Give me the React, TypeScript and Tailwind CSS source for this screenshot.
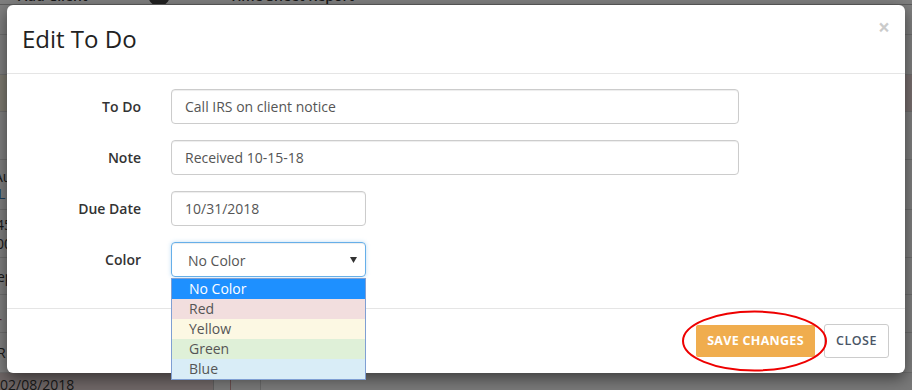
import React from "react";

function Caret() {
  return (
    <svg width="7" height="6" viewBox="0 0 7 6" className="block">
      <path d="M0 0 L7 0 L3.5 6 Z" fill="#333" />
    </svg>
  );
}

function Row({ label, children }: { label: string; children: React.ReactNode }) {
  return (
    <div className="flex items-center">
      <div className="w-[119px] text-right text-[14px] font-semibold text-[#333]">{label}</div>
      <div className="ml-[30px]">{children}</div>
    </div>
  );
}

function Input({ value, w }: { value: string; w: string }) {
  return (
    <div
      className={`${w} h-[35px] flex items-center rounded-[4px] border border-[#ccc] px-[13px] text-[14px] text-[#555] shadow-[inset_0_1px_1px_rgba(0,0,0,0.075)]`}
    >
      {value}
    </div>
  );
}

const options = [
  { name: "No Color", cls: "bg-[#1e90ff] text-white" },
  { name: "Red", cls: "bg-[#f2dede] text-[#555]" },
  { name: "Yellow", cls: "bg-[#fcf8e3] text-[#555]" },
  { name: "Green", cls: "bg-[#dff0d8] text-[#555]" },
  { name: "Blue", cls: "bg-[#d9edf7] text-[#555]" },
];

function BackgroundPage() {
  return (
    <div className="flex flex-col w-[912px] h-[390px] bg-white text-[14px] text-[#333]">
      <div className="h-[5px] overflow-hidden border-b border-[#bbb] flex">
        <div className="-mt-[14px] flex items-center gap-[60px] pl-[18px] text-[14px] font-semibold">
          <span>Add Client</span>
          <span className="w-[22px] h-[22px] rounded-full bg-[#444]" />
          <span>Time Sheet Report</span>
        </div>
      </div>
      <div className="h-[30px] border-b border-[#ddd]" />
      <div className="h-[40px] border-b border-[#ddd]" />
      <div className="h-[37px] flex border-b border-[#ddd]">
        <div className="w-[456px] bg-[#fcf6e2]" />
        <div className="flex-1 bg-[#f2dede]" />
      </div>
      <div className="h-[48px] border-b border-[#ddd]" />
      <div className="h-[50px] border-b border-[#ddd] flex flex-col justify-center leading-[17px]">
        <span className="-ml-[6px]">Aug</span>
        <span className="-ml-[2px] text-[#337ab7]">L</span>
      </div>
      <div className="h-[48px] border-b border-[#ddd] flex flex-col justify-center leading-[19px]">
        <span className="-ml-[4px]">45</span>
        <span className="-ml-[4px]">00</span>
      </div>
      <div className="h-[37px] border-b border-[#ddd] flex items-center">
        <span className="-ml-[3px]">ep</span>
      </div>
      <div className="h-[38px] border-b border-[#ddd] flex items-end">
        <span className="-ml-[4px] text-[#a94442]">r</span>
      </div>
      <div className="h-[40px] border-b border-[#ddd] flex items-center">
        <span className="-ml-[3px]">R</span>
      </div>
      <div className="flex-1 flex">
        <div className="w-[213px] bg-[#dfcfcf] flex items-end leading-[14px]">
          <span className="-mb-[2px]">02/08/2018</span>
        </div>
        <div className="w-[17px] border-l border-[#bbb] bg-[#eee]" />
        <div className="w-[30px] border-l border-[#c99] bg-[#eee]" />
        <div className="flex-1 border-l border-[#ccc] bg-[#f2f2f2]" />
      </div>
    </div>
  );
}

export default function App() {
  return (
    <div className="relative w-[912px] h-[390px] overflow-hidden font-['Open_Sans',sans-serif]">
      <BackgroundPage />
      <div className="absolute inset-0 bg-black/50" />

      <div className="absolute left-[7px] top-[5px] w-[898px] rounded-[6px] bg-white shadow-[0_5px_15px_rgba(0,0,0,0.5)]">
        <div className="h-[69px] flex justify-between items-center px-[15px] border-b border-[#e5e5e5]">
          <div className="text-[24px] text-[#222] leading-none">Edit To Do</div>
          <div className="self-start mt-[12px] text-[21px] font-bold leading-none text-black opacity-20">×</div>
        </div>

        <div className="flex flex-col gap-[16px] px-[15px] pt-[15px] pb-[31px]">
          <Row label="To Do">
            <Input value="Call IRS on client notice" w="w-[568px]" />
          </Row>
          <Row label="Note">
            <Input value="Received 10-15-18" w="w-[568px]" />
          </Row>
          <Row label="Due Date">
            <Input value="10/31/2018" w="w-[195px]" />
          </Row>
          <Row label="Color">
            <div className="relative w-[195px] h-[35px]">
              <div className="w-[195px] h-[35px] flex items-center justify-between rounded-[4px] border border-[#66afe9] pl-[16px] pr-[8px] text-[14px] text-[#555] shadow-[inset_0_1px_1px_rgba(0,0,0,0.075),0_0_4px_rgba(102,175,233,0.4)]">
                <span className="pt-[2px]">No Color</span>
                <Caret />
              </div>
              <div className="absolute left-0 top-[36px] z-10 w-[195px] border border-[#7f9fd3] bg-white">
                {options.map((o) => (
                  <div key={o.name} className={`h-[20px] leading-[20px] pl-[17px] text-[14px] ${o.cls}`}>
                    {o.name}
                  </div>
                ))}
              </div>
            </div>
          </Row>
        </div>

        <div className="flex justify-end items-center gap-[9px] border-t border-[#e5e5e5] pt-[15px] pb-[15px] pr-[16px]">
          <div className="w-[119px] h-[32px] flex items-center justify-center rounded-[2px] bg-[#f0ad4e] text-[12.5px] font-bold text-white tracking-[0.3px]">
            SAVE CHANGES
          </div>
          <div className="w-[65px] h-[34px] flex items-center justify-center rounded-[3px] border border-[#ccc] bg-white text-[12.5px] font-semibold text-[#4a5566] tracking-[0.5px]">
            CLOSE
          </div>
        </div>
      </div>

      <svg className="absolute left-[682px] top-[310px] z-20" width="146" height="63" viewBox="0 0 146 63">
        <ellipse cx="72.5" cy="31" rx="71.5" ry="29.5" fill="none" stroke="#ee0000" strokeWidth="2" />
      </svg>
    </div>
  );
}
